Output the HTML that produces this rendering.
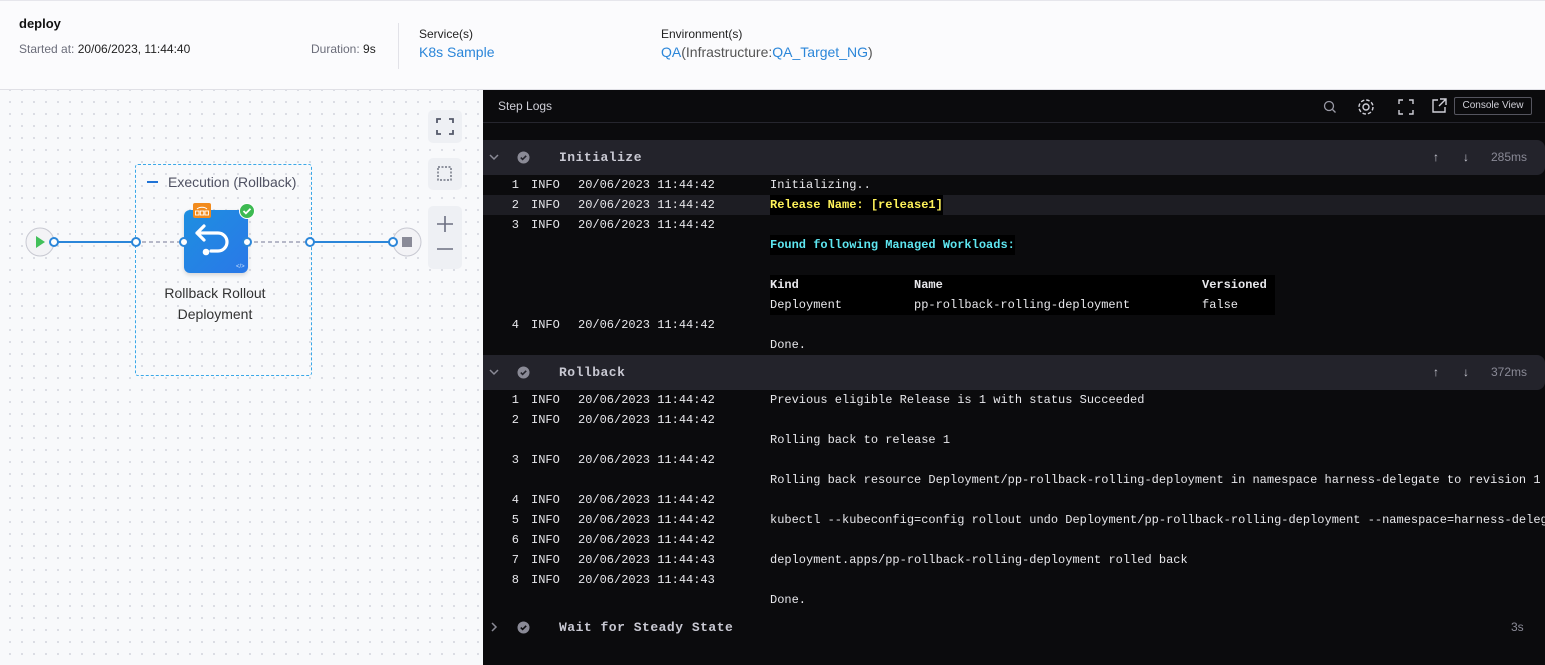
<!DOCTYPE html>
<html><head><meta charset="utf-8">
<style>
*{margin:0;padding:0;box-sizing:border-box}
body{width:1545px;height:665px;overflow:hidden;font-family:"Liberation Sans",sans-serif;background:#fff;position:relative}
.top{position:absolute;left:0;top:0;width:1545px;height:90px;background:#fbfbfd;border-top:1px solid #e6e6ec;border-bottom:1px solid #e0e0e6}
.abs{position:absolute;white-space:nowrap}
.left{position:absolute;left:0;top:90px;width:483px;height:575px;background-color:#f8f9fb;background-image:radial-gradient(#d9dbe2 1px,transparent 1.2px);background-size:12px 12px;background-position:4px 6px}
.right{position:absolute;left:483px;top:90px;width:1062px;height:575px;background:#0b0b0d;overflow:hidden;font-family:"Liberation Mono",monospace;font-size:12px;color:#e8e8ec}
.sec{position:absolute;left:0;width:1062px;height:35px;background:#23232b;border-radius:0 8px 8px 0}
.row{position:absolute;left:0;width:1062px;height:20px;line-height:20px;white-space:nowrap;margin-top:1px}
.row span{position:absolute}
.n{width:36px;text-align:right;left:0}
.zb{position:absolute;left:428px;width:34px;background:#eef0f4;border-radius:5px}
</style></head><body>
<div class="top">
<div class="abs" style="left:19px;top:15px;font-size:13px;font-weight:bold;color:#111">deploy</div>
<div class="abs" style="left:19px;top:41px;font-size:12px;color:#6b6d7a">Started at: <span style="color:#222">20/06/2023, 11:44:40</span></div>
<div class="abs" style="left:311px;top:41px;font-size:12px;color:#6b6d7a">Duration: <span style="color:#222">9s</span></div>
<div style="position:absolute;left:398px;top:22px;width:1px;height:46px;background:#e2e2e8"></div>
<div class="abs" style="left:419px;top:26px;font-size:12px;color:#222">Service(s)</div>
<div class="abs" style="left:419px;top:43px;font-size:14px;color:#2b86d9">K8s Sample</div>
<div class="abs" style="left:661px;top:26px;font-size:12px;color:#222">Environment(s)</div>
<div class="abs" style="left:661px;top:43px;font-size:14px;color:#555"><span style="color:#2b86d9">QA</span>(Infrastructure:<span style="color:#2b86d9">QA_Target_NG</span>)</div>
</div>

<div class="left">
<div class="zb" style="top:20px;height:33px"><svg width="34" height="33"><path d="M9 13V9h4M21 9h4v4M25 20v4h-4M13 24H9v-4" stroke="#555a6a" stroke-width="1.8" fill="none"/></svg></div>
<div class="zb" style="top:68px;height:32px"><svg width="34" height="32"><rect x="10" y="9" width="13" height="13" stroke="#555a6a" stroke-width="1.2" stroke-dasharray="2 1.5" fill="none"/></svg></div>
<div class="zb" style="top:116px;height:63px"><svg width="34" height="63"><path d="M17 10v16M9 18h16M9 43h16" stroke="#6b6f80" stroke-width="1.6"/></svg></div>
<div style="position:absolute;left:135px;top:74px;width:177px;height:212px;border:1px dashed #3aa8e8;border-radius:3px"></div>
<div style="position:absolute;left:147px;top:91px;width:11px;height:2px;background:#1f73d6"></div>
<div class="abs" style="left:168px;top:84px;font-size:14px;color:#4f5162">Execution (Rollback)</div>
<svg style="position:absolute;left:0;top:130px" width="483" height="44">
<line x1="54" y1="22" x2="135" y2="22" stroke="#2b86d9" stroke-width="2"/>
<line x1="135" y1="22" x2="184" y2="22" stroke="#a0a3b8" stroke-width="1.5" stroke-dasharray="4 3"/>
<line x1="247" y1="22" x2="310" y2="22" stroke="#a0a3b8" stroke-width="1.5" stroke-dasharray="4 3"/>
<line x1="310" y1="22" x2="393" y2="22" stroke="#2b86d9" stroke-width="2"/>
<circle cx="40" cy="22" r="14" fill="#f3f3f6" stroke="#c8c9d2"/>
<path d="M36 16l9 6-9 6z" fill="#42c05a"/>
<circle cx="407" cy="22" r="14" fill="#f3f3f6" stroke="#c8c9d2"/>
<rect x="402" y="17" width="10" height="10" fill="#8a8b98"/>
</svg>
<div style="position:absolute;left:184px;top:120px;width:64px;height:63px;border-radius:6px;background:linear-gradient(135deg,#1e8fe0,#2a78e8);box-shadow:0 2px 4px rgba(0,0,0,.15)"></div>
<svg style="position:absolute;left:184px;top:120px" width="64" height="63"><path d="M20 16l-7 7 7 7M13 23h21a9 9 0 0 1 0 18H27" stroke="#fff" stroke-width="3.2" fill="none" stroke-linecap="round" stroke-linejoin="round"/><circle cx="22" cy="42" r="3.3" fill="#fff"/><text x="52" y="58" font-size="6" fill="#cfe4ff" font-family="Liberation Sans">&lt;/&gt;</text></svg>
<div style="position:absolute;left:193px;top:113px;width:18px;height:15px;background:#f28b1d;border-radius:2px"></div>
<svg style="position:absolute;left:193px;top:113px" width="18" height="15"><path d="M4 6a6 4 0 0 1 10 0" stroke="#fff" fill="none" stroke-width="1"/><rect x="2.5" y="8" width="3.5" height="4" stroke="#fff" fill="none" stroke-width=".9"/><rect x="7.3" y="8" width="3.5" height="4" stroke="#fff" fill="none" stroke-width=".9"/><rect x="12" y="8" width="3.5" height="4" stroke="#fff" fill="none" stroke-width=".9"/></svg>
<svg style="position:absolute;left:239px;top:113px" width="16" height="16"><circle cx="8" cy="8" r="7.5" fill="#3dba52" stroke="#fff"/><path d="M4.5 8l2.4 2.4 4.6-4.6" stroke="#fff" stroke-width="1.8" fill="none"/></svg>
<svg style="position:absolute;left:0;top:130px" width="483" height="44">
<g fill="#fff" stroke="#2b86d9" stroke-width="2"><circle cx="54" cy="22" r="4"/><circle cx="136" cy="22" r="4"/><circle cx="184" cy="22" r="4"/><circle cx="247" cy="22" r="4"/><circle cx="310" cy="22" r="4"/><circle cx="393" cy="22" r="4"/></g></svg>
<div class="abs" style="left:135px;top:193px;width:160px;text-align:center;font-size:14px;line-height:21px;color:#333">Rollback Rollout<br>Deployment</div>
</div>

<div class="right">
<div class="abs" style="left:15px;top:9px;font-family:'Liberation Sans',sans-serif;font-size:12px;color:#d0d0d8">Step Logs</div>
<div style="position:absolute;left:0;top:32px;width:1062px;height:1px;background:#26262e"></div>
<svg style="position:absolute;left:838px;top:8px" width="18" height="18"><circle cx="8" cy="8" r="4.5" stroke="#9a9aa6" stroke-width="1.3" fill="none"/><path d="M11.5 11.5l3 3" stroke="#9a9aa6" stroke-width="1.3"/></svg>
<svg style="position:absolute;left:872px;top:6px" width="22" height="22"><circle cx="11" cy="11" r="3" stroke="#d0d0d8" stroke-width="1.4" fill="none"/><circle cx="11" cy="11" r="7" stroke="#d0d0d8" stroke-width="1.4" fill="none" stroke-dasharray="3.5 2"/></svg>
<svg style="position:absolute;left:913px;top:7px" width="20" height="20"><path d="M3 7V3h4M13 3h4v4M17 13v4h-4M7 17H3v-4" stroke="#d0d0d8" stroke-width="1.4" fill="none"/></svg>
<svg style="position:absolute;left:946px;top:6px" width="20" height="20"><path d="M9 4H4v12h12v-5M11 3h6v6M17 3l-7 7" stroke="#d0d0d8" stroke-width="1.4" fill="none"/></svg>
<div class="abs" style="left:971px;top:7px;width:78px;height:18px;border:1px solid #55555f;border-radius:2px;font-family:'Liberation Sans',sans-serif;font-size:10px;color:#d0d0d8;line-height:16px;text-align:center">Console View</div>

<div class="sec" style="top:50px"></div>
<div class="sec" style="top:265px"></div>
<div style="position:absolute;left:0;top:105px;width:1062px;height:20px;background:#1d1d23"></div>

<div class="row" style="top:57px;font-size:13px;color:#c8c8d2;height:21px;line-height:21px;margin-top:0"><span style="left:5px"><svg width="12" height="21"><path d="M2 8l4 4 4-4" stroke="#8a8a96" stroke-width="1.5" fill="none"/></svg></span><span style="left:34px"><svg width="13" height="13" style="margin-top:4px"><circle cx="6.5" cy="6.5" r="6" fill="#8a8a96"/><path d="M3.8 6.6l1.8 1.8 3.6-3.6" stroke="#23232b" stroke-width="1.6" fill="none"/></svg></span><span style="left:76px;font-weight:bold;letter-spacing:.5px">Initialize</span><span style="left:950px;font-family:'Liberation Sans';font-size:12px">↑</span><span style="left:980px;font-family:'Liberation Sans';font-size:12px">↓</span><span style="left:1008px;font-family:'Liberation Sans';font-size:12px;color:#8a8a96">285ms</span></div>
<div class="row" style="top:272px;font-size:13px;color:#c8c8d2;height:21px;line-height:21px;margin-top:0"><span style="left:5px"><svg width="12" height="21"><path d="M2 8l4 4 4-4" stroke="#8a8a96" stroke-width="1.5" fill="none"/></svg></span><span style="left:34px"><svg width="13" height="13" style="margin-top:4px"><circle cx="6.5" cy="6.5" r="6" fill="#8a8a96"/><path d="M3.8 6.6l1.8 1.8 3.6-3.6" stroke="#23232b" stroke-width="1.6" fill="none"/></svg></span><span style="left:76px;font-weight:bold;letter-spacing:.5px">Rollback</span><span style="left:950px;font-family:'Liberation Sans';font-size:12px">↑</span><span style="left:980px;font-family:'Liberation Sans';font-size:12px">↓</span><span style="left:1008px;font-family:'Liberation Sans';font-size:12px;color:#8a8a96">372ms</span></div>
<div class="row" style="top:527px;font-size:13px;color:#c8c8d2;height:21px;line-height:21px;margin-top:0"><span style="left:5px"><svg width="12" height="21"><path d="M4 6l4 4-4 4" stroke="#8a8a96" stroke-width="1.5" fill="none"/></svg></span><span style="left:34px"><svg width="13" height="13" style="margin-top:4px"><circle cx="6.5" cy="6.5" r="6" fill="#8a8a96"/><path d="M3.8 6.6l1.8 1.8 3.6-3.6" stroke="#0b0b0d" stroke-width="1.6" fill="none"/></svg></span><span style="left:76px;font-weight:bold;letter-spacing:.5px">Wait for Steady State</span><span style="left:1028px;font-family:'Liberation Sans';font-size:12px;color:#8a8a96">3s</span></div>

<div style="position:absolute;left:287px;top:185px;width:505px;height:40px;background:#000"></div>

<div class="row" style="top:84px"><span class="n">1</span><span style="left:48px">INFO</span><span style="left:95px">20/06/2023 11:44:42</span><span style="left:287px">Initializing..</span></div>
<div class="row" style="top:104px"><span class="n">2</span><span style="left:48px">INFO</span><span style="left:95px">20/06/2023 11:44:42</span><span style="left:287px;color:#fff35a;font-weight:bold;background:#000">Release Name: [release1]</span></div>
<div class="row" style="top:124px"><span class="n">3</span><span style="left:48px">INFO</span><span style="left:95px">20/06/2023 11:44:42</span></div>
<div class="row" style="top:144px"><span style="left:287px;color:#5ee6f0;font-weight:bold;background:#000">Found following Managed Workloads:</span></div>
<div class="row" style="top:184px;font-weight:bold"><span style="left:287px">Kind</span><span style="left:431px">Name</span><span style="left:719px">Versioned</span></div>
<div class="row" style="top:204px"><span style="left:287px">Deployment</span><span style="left:431px">pp-rollback-rolling-deployment</span><span style="left:719px">false</span></div>
<div class="row" style="top:224px"><span class="n">4</span><span style="left:48px">INFO</span><span style="left:95px">20/06/2023 11:44:42</span></div>
<div class="row" style="top:244px"><span style="left:287px">Done.</span></div>

<div class="row" style="top:299px"><span class="n">1</span><span style="left:48px">INFO</span><span style="left:95px">20/06/2023 11:44:42</span><span style="left:287px">Previous eligible Release is 1 with status Succeeded</span></div>
<div class="row" style="top:319px"><span class="n">2</span><span style="left:48px">INFO</span><span style="left:95px">20/06/2023 11:44:42</span></div>
<div class="row" style="top:339px"><span style="left:287px">Rolling back to release 1</span></div>
<div class="row" style="top:359px"><span class="n">3</span><span style="left:48px">INFO</span><span style="left:95px">20/06/2023 11:44:42</span></div>
<div class="row" style="top:379px"><span style="left:287px">Rolling back resource Deployment/pp-rollback-rolling-deployment in namespace harness-delegate to revision 1</span></div>
<div class="row" style="top:399px"><span class="n">4</span><span style="left:48px">INFO</span><span style="left:95px">20/06/2023 11:44:42</span></div>
<div class="row" style="top:419px"><span class="n">5</span><span style="left:48px">INFO</span><span style="left:95px">20/06/2023 11:44:42</span><span style="left:287px">kubectl --kubeconfig=config rollout undo Deployment/pp-rollback-rolling-deployment --namespace=harness-delegate</span></div>
<div class="row" style="top:439px"><span class="n">6</span><span style="left:48px">INFO</span><span style="left:95px">20/06/2023 11:44:42</span></div>
<div class="row" style="top:459px"><span class="n">7</span><span style="left:48px">INFO</span><span style="left:95px">20/06/2023 11:44:43</span><span style="left:287px">deployment.apps/pp-rollback-rolling-deployment rolled back</span></div>
<div class="row" style="top:479px"><span class="n">8</span><span style="left:48px">INFO</span><span style="left:95px">20/06/2023 11:44:43</span></div>
<div class="row" style="top:499px"><span style="left:287px">Done.</span></div>
</div>
</body></html>
